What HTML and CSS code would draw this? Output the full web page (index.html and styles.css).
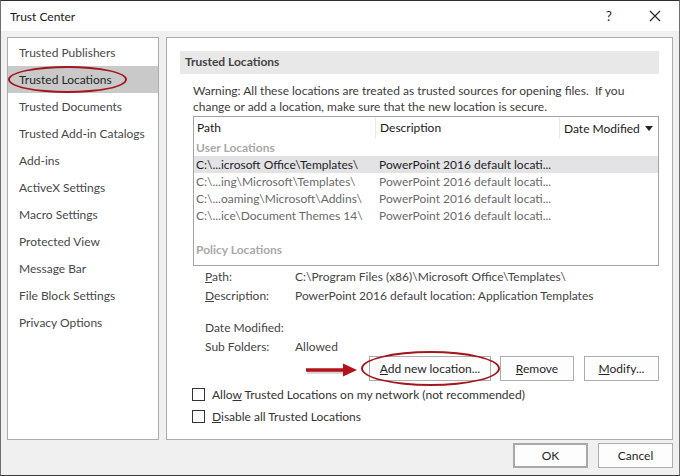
FILE: index.html
```html
<!DOCTYPE html>
<html>
<head>
<meta charset="utf-8">
<link rel="stylesheet" href="styles.css">
</head>
<body>
<div class="window">
  <div class="titlebar">
    <span class="title">Trust Center</span>
    <span class="help">?</span>
    <span class="close"><svg width="12" height="12" viewBox="0 0 12 12"><path d="M1 1L11 11M11 1L1 11" stroke="#222" stroke-width="1.1" fill="none"/></svg></span>
  </div>
  <div class="body">
    <div class="panels">
      <nav class="nav">
        <div class="nav-item">Trusted Publishers</div>
        <div class="nav-item selected">Trusted Locations<span class="ring nav-ring"></span></div>
        <div class="nav-item">Trusted Documents</div>
        <div class="nav-item">Trusted Add-in Catalogs</div>
        <div class="nav-item">Add-ins</div>
        <div class="nav-item">ActiveX Settings</div>
        <div class="nav-item">Macro Settings</div>
        <div class="nav-item">Protected View</div>
        <div class="nav-item">Message Bar</div>
        <div class="nav-item">File Block Settings</div>
        <div class="nav-item">Privacy Options</div>
      </nav>
      <section class="main">
        <div class="section-head">Trusted Locations</div>
        <p class="warning">Warning: All these locations are treated as trusted sources for opening files.&nbsp; If you<br>change or add a location, make sure that the new location is secure.</p>
        <div class="table">
          <div class="thead">
            <div class="th c1">Path</div>
            <div class="th c2">Description</div>
            <div class="th c3">Date Modified <svg class="sort" width="8" height="5" viewBox="0 0 8 5"><path d="M0 0H8L4 5Z" fill="#222"/></svg></div>
          </div>
          <div class="group">User Locations</div>
          <div class="row sel"><span class="c1">C:\...icrosoft Office\Templates\</span><span class="c2">PowerPoint 2016 default locati...</span></div>
          <div class="row"><span class="c1">C:\...ing\Microsoft\Templates\</span><span class="c2">PowerPoint 2016 default locati...</span></div>
          <div class="row"><span class="c1">C:\...oaming\Microsoft\Addins\</span><span class="c2">PowerPoint 2016 default locati...</span></div>
          <div class="row"><span class="c1">C:\...ice\Document Themes 14\</span><span class="c2">PowerPoint 2016 default locati...</span></div>
          <div class="spacer"></div>
          <div class="group">Policy Locations</div>
        </div>
        <div class="details">
          <span class="lbl"><u>P</u>ath:</span><span class="val">C:\Program Files (x86)\Microsoft Office\Templates\</span>
          <span class="lbl"><u>D</u>escription:</span><span class="val">PowerPoint 2016 default location: Application Templates</span>
          <span class="lbl gap">Date Modified:</span><span class="val gap"></span>
          <span class="lbl">Sub Folders:</span><span class="val">Allowed</span>
        </div>
        <div class="actions">
          <svg class="arrow" width="54" height="18" viewBox="0 0 54 18"><path d="M1 10H42" stroke="#808080" stroke-opacity="0.35" stroke-width="3.5"/><path d="M0 8H40" stroke="#b3141c" stroke-width="3.5"/><path d="M37 1.5L51 8L37 14.5Z" fill="#b3141c"/></svg>
          <span class="ring add-ring"></span>
          <button class="btn add"><u>A</u>dd new location...</button>
          <button class="btn remove"><u>R</u>emove</button>
          <button class="btn modify"><u>M</u>odify...</button>
        </div>
        <div class="checks">
          <label class="check"><span class="box"></span><span>Allo<u>w</u> Trusted Locations on my network (not recommended)</span></label>
          <label class="check"><span class="box"></span><span><u>D</u>isable all Trusted Locations</span></label>
        </div>
      </section>
    </div>
    <div class="footer">
      <button class="btn ok">OK</button>
      <button class="btn cancel">Cancel</button>
    </div>
  </div>
</div>
</body>
</html>
```

FILE: styles.css
```css
* { box-sizing: border-box; }
html, body { margin: 0; padding: 0; }
body {
  font-family: "Segoe UI", Lato, "Liberation Sans", sans-serif;
  font-size: 12px;
  color: #262626;
  background: #f0f0f0;
}
.window {
  width: 680px;
  height: 476px;
  border: 1px solid #6f6f6f;
  border-top-color: #2e2e2e;
  border-bottom-color: #3a3a3a;
  background: #f0f0f0;
  display: flex;
  flex-direction: column;
}
.titlebar {
  height: 30px;
  background: #fff;
  display: flex;
  align-items: center;
  padding-left: 9px;
  flex: none;
}
.title { flex: 1; color: #1a1a1a; font-size: 12px; padding-top: 1px; }
.help { width: 12px; margin-right: 31px; color: #222; font-size: 13px; }
.close { width: 12px; height: 12px; margin-right: 18px; display: flex; }
.body {
  flex: 1;
  padding: 6px 6px 0 6px;
  display: flex;
  flex-direction: column;
}
.panels {
  display: flex;
  gap: 7px;
  height: 403px;
  flex: none;
}
.nav {
  width: 152px;
  background: #fff;
  border: 1px solid #acacac;
  padding-top: 1px;
}
.nav-item {
  position: relative;
  height: 27px;
  line-height: 27px;
  padding-left: 11px;
  color: #484848;
  white-space: nowrap;
}
.nav-item.selected { background: #c9c9c9; color: #262626; }
.ring {
  position: absolute;
  border: 2px solid #a3161e;
  border-radius: 50%;
}
.nav-ring { left: 0; top: 0; width: 119px; height: 27px; }
.main {
  width: 507px;
  background: #fff;
  border: 1px solid #acacac;
  display: flex;
  flex-direction: column;
}
.section-head {
  margin: 13px 13px 0 13px;
  height: 23px;
  line-height: 22px;
  background: #e8e8e8;
  padding-left: 5px;
  font-weight: bold;
  color: #444;
}
.warning {
  margin: 9px 0 0 26px;
  line-height: 16px;
  color: #3c3c3c;
}
.table {
  margin: 1px 13px 0 26px;
  height: 150px;
  border: 1px solid #a3a3a3;
  display: flex;
  flex-direction: column;
}
.thead { display: flex; height: 22px; flex: none; }
.th {
  line-height: 21px;
  padding-left: 3px;
  border-right: 1px solid #ececec;
  color: #1a1a1a;
  white-space: nowrap;
}
.th.c1 { width: 182px; }
.th.c2 { width: 184px; padding-left: 4px; }
.th.c3 { flex: 1; border-right: 0; padding-left: 4px; display: flex; align-items: center; }
.sort { margin-left: 5px; margin-top: 1px; }
.group {
  height: 17px;
  line-height: 17px;
  padding-left: 2px;
  color: #a9a9a9;
  font-weight: bold;
  flex: none;
}
.row {
  display: flex;
  height: 17px;
  line-height: 17px;
  color: #6a6a6a;
  flex: none;
  white-space: nowrap;
}
.row.sel { background: #e3e3e6; color: #1e1e1e; }
.row .c1 { width: 184px; padding-left: 2px; }
.row .c2 { padding-left: 1px; }
.spacer { height: 17px; flex: none; }
.details {
  margin: 1px 0 0 38px;
  display: grid;
  grid-template-columns: 90px 1fr;
  grid-template-rows: 19px 19px 32px 19px;
  line-height: 19px;
  color: #444;
}
.details .gap { align-self: end; }
.actions {
  position: relative;
  display: flex;
  justify-content: flex-end;
  margin: 0 13px 0 0;
  height: 25px;
}
.btn {
  font-family: inherit;
  font-size: 12px;
  color: #262626;
  background: #fdfdfd;
  border: 1px solid #adadad;
  height: 25px;
  padding: 0;
  margin: 0;
  border-radius: 0;
}
.btn.add { width: 122px; }
.btn.remove { width: 74px; margin-left: 9px; }
.btn.modify { width: 75px; margin-left: 10px; }
.arrow { position: absolute; left: 139px; top: 6px; display: block; }
.add-ring { left: 194px; top: -5px; width: 139px; height: 35px; }
.checks { margin: 2px 0 0 25px; display: flex; flex-direction: column; }
.check {
  display: flex;
  align-items: center;
  height: 22px;
  color: #333;
}
.box {
  width: 13px;
  height: 13px;
  border: 1px solid #333;
  background: #fff;
  margin-right: 7px;
  flex: none;
}
.footer {
  display: flex;
  justify-content: flex-end;
  gap: 10px;
  margin-top: 3px;
}
.btn.ok { width: 75px; border: 2px solid #a9a9a9; }
.btn.cancel { width: 75px; }
```
